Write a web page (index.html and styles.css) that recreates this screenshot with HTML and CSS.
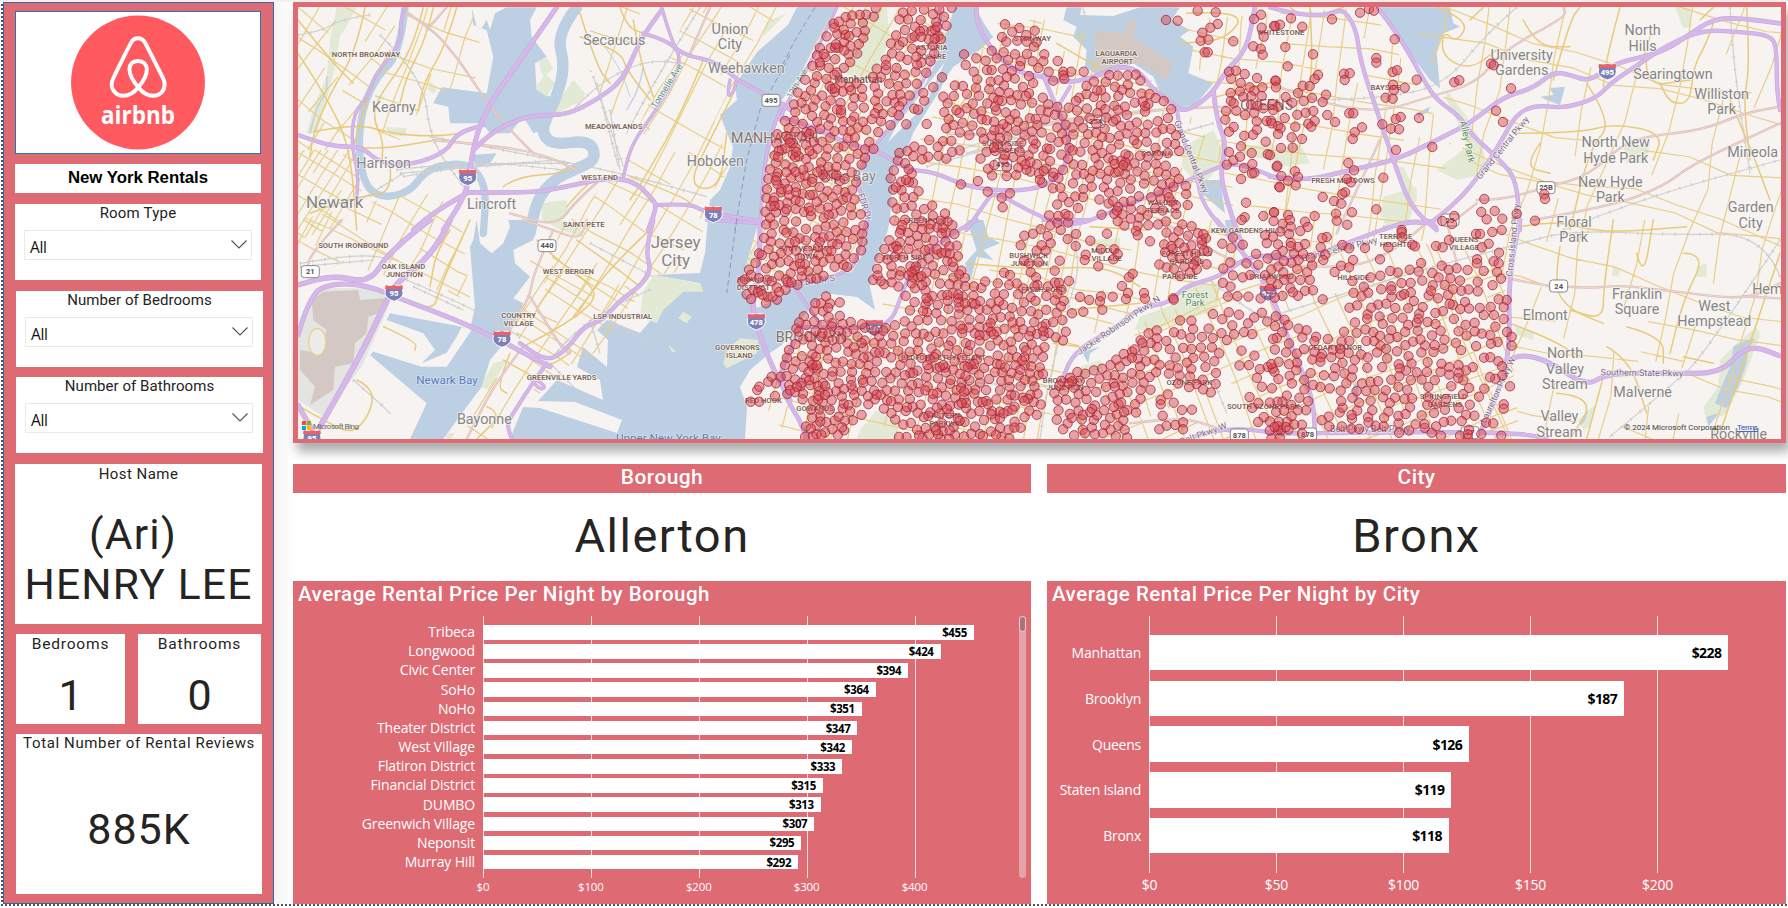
FILE: index.html
```html
<!DOCTYPE html>
<html lang="en">
<head>
<meta charset="utf-8">
<title>New York Rentals</title>
<link rel="stylesheet" href="styles.css">
</head>
<body>
<div class="report">
  <aside class="sidebar">
    <div class="card logo">
      <svg viewBox="0 0 246 143" width="244" height="141">
        <circle cx="123" cy="71.5" r="67.900" fill="#ff5a5f"/>
        <g transform="translate(-15 -11) scale(.33333)" fill="none" stroke="#fff" stroke-width="12" stroke-linejoin="round">
          <path d="M415 262C396 240 388 222 388 207C389 190 399 182 414 182C430 182 440 192 441 207C441 223 434 240 415 262C400 281 386 288 369 288C344 288 328 264 336 241C342 226 380 150 393 126C399 115 406 113 414 113C423 113 430 116 436 127L491 236C503 263 486 288 460 288C442 288 428 279 415 262Z"/>
        </g>
        <text x="123" y="113.500" class="wordmark" text-anchor="middle" textLength="75" lengthAdjust="spacingAndGlyphs">airbnb</text>
      </svg>
    </div>
    <div class="card heading">New York Rentals</div>
    <div class="card slicer"><div class="label">Room Type</div><div class="select"><span>All</span><svg width="16" height="9" viewBox="0 0 16 9"><path d="M.5.5L8 8L15.500.5"/></svg></div></div>
    <div class="card slicer shift beds"><div class="label">Number of Bedrooms</div><div class="select"><span>All</span><svg width="16" height="9" viewBox="0 0 16 9"><path d="M.5.5L8 8L15.500.5"/></svg></div></div>
    <div class="card slicer shift baths"><div class="label">Number of Bathrooms</div><div class="select"><span>All</span><svg width="16" height="9" viewBox="0 0 16 9"><path d="M.5.5L8 8L15.500.5"/></svg></div></div>
    <div class="card host"><div class="label">Host Name</div><div class="big"><span class="first">(Ari)</span><span>HENRY LEE</span></div></div>
    <div class="pair">
      <div class="card count"><div class="label">Bedrooms</div><div class="num">1</div></div>
      <div class="card count"><div class="label">Bathrooms</div><div class="num">0</div></div>
    </div>
    <div class="card reviews"><div class="label">Total Number of Rental Reviews</div><div class="num">885K</div></div>
  </aside>
  <main class="content">
    <div class="map"><svg id="map" viewBox="298 7 1483 432" width="1483" height="432"></svg></div>
    <div class="columns">
      <section class="col">
        <div class="banner">Borough</div>
        <div class="value">Allerton</div>
        <div class="panel">
          <h2>Average Rental Price Per Night by Borough</h2>
          <div class="chart boroughs" id="boroughs"></div>
          <div class="scroll"><i></i></div>
        </div>
      </section>
      <section class="col">
        <div class="banner">City</div>
        <div class="value">Bronx</div>
        <div class="panel">
          <h2>Average Rental Price Per Night by City</h2>
          <div class="chart cities" id="cities"></div>
        </div>
      </section>
    </div>
  </main>
</div>
<script src="app.js"></script>
</body>
</html>
```
FILE: styles.css
```css
* { box-sizing: border-box; }
body { margin: 0; width: 1788px; height: 908px; overflow: hidden; background: #fff; font-family: Roboto, "Liberation Sans", sans-serif; color: #252423; }
.report { display: flex; position: relative; height: 907px; padding: 2px 0 0 3px; background: linear-gradient(#ececea, #f5f5f3) 0 0 / 100% 2px no-repeat, linear-gradient(90deg, #f4f4f4, #fff 20px) 274px 0 / 20px 904px no-repeat; }
.report::before { content: ""; position: absolute; left: 1px; top: 4px; width: 2px; height: 900px; background: repeating-linear-gradient(#555 0 2px, #fff 2px 4px); }
.report::after { content: ""; position: absolute; left: 1px; right: 0; bottom: 1px; height: 2px; background: repeating-linear-gradient(90deg, #555 0 2px, #fff 2px 4px); }
.sidebar { width: 271px; height: 902px; background: #de6a73; border: 1px solid #2f66ad; padding: 8px 0 0 11px; display: flex; flex-direction: column; }
.card { background: #fff; width: 246px; flex: none; }
.logo { height: 143px; border: 1px solid #2474c4; }
.logo svg { display: block; }
.wordmark { font: 700 26px "Open Sans", sans-serif; fill: #fff; }
.heading { height: 29px; margin-top: 10px; text-align: center; font: 700 16.800px/28px "Liberation Sans", Arial, sans-serif; color: #000; }
.slicer { height: 76px; margin-top: 11px; }
.shift { margin-left: 1px; width: 247px; }
.baths { margin-top: 10px; }
.label { text-align: center; font-size: 15px; line-height: 18px; letter-spacing: .2px; color: #252423; white-space: nowrap; }
.shift .label { letter-spacing: .05px; }
.select { margin: 8px 9px 0 9px; height: 30px; width: 228px; border: 1px solid #eaeaea; display: flex; align-items: center; justify-content: space-between; padding: 4px 4px 0 5px; font: 15.500px "Open Sans", sans-serif; color: #111; }
.select span { letter-spacing: -.3px; }
.select svg { fill: none; stroke: #555; stroke-width: 1.200; margin-bottom: 6px; }
.host { height: 160px; width: 247px; margin-top: 11px; padding-top: 1px; }
.host .label { letter-spacing: .45px; }
.big { display: flex; flex-direction: column; font-size: 42.500px; line-height: 50px; margin-top: 27px; align-items: center; white-space: nowrap; }
.big .first { margin-right: 11px; }
.big span { letter-spacing: 1.200px; }
.pair { display: flex; gap: 13px; margin: 10px 0 0 1px; }
.count { width: 109px; height: 90px; padding-top: 1px; }
.count + .count { width: 123px; }
.count .label { font-size: 15.500px; letter-spacing: .8px; }
.num { text-align: center; font-size: 43px; line-height: 50px; }
.count .num { margin-top: 17px; }
.reviews { height: 160px; margin: 10px 0 0 1px; }
.reviews .label { letter-spacing: .63px; }
.reviews .num { margin-top: 52px; letter-spacing: 1px; }
.content { margin-left: 19px; width: 1493px; }
.map { height: 441px; background: #de6a73; padding: 5px 5px 4px; box-shadow: 4px 9px 10px rgba(0,0,0,.32); }
.map svg { display: block; }
.map text { font-family: Roboto, sans-serif; }
.columns { display: flex; gap: 16px; margin-top: 21px; }
.col { width: 738px; }
.col + .col { width: 739px; }
.banner { height: 29px; background: #de6a73; color: #fff; text-align: center; font-size: 21px; line-height: 26px; font-weight: 500; letter-spacing: .4px; }
.value { height: 88px; text-align: center; font-size: 47px; line-height: 86px; letter-spacing: 1.500px; }
.panel { position: relative; height: 323px; background: #de6a73; }
h2 { margin: 0; padding: 1px 0 0 5px; height: 35px; color: #fff; font-size: 20.500px; line-height: 24px; font-weight: 500; letter-spacing: .52px; white-space: nowrap; }
.chart { display: grid; color: #fff; font-family: "Open Sans", sans-serif; }
.plot { display: flex; flex-direction: column; background: repeating-linear-gradient(90deg, #f7dfe1 0 1px, transparent 1px var(--step)); }
.names { display: flex; flex-direction: column; text-align: right; white-space: nowrap; }
.bar { background: #fff; color: #000; font-weight: 700; display: flex; justify-content: flex-end; align-items: center; padding-right: 7px; flex: none; }
.axis { display: flex; }
.axis span { flex: none; text-align: center; }
.boroughs { grid-template-columns: 182px 1fr; --step: 107.900px; font-size: 14px; letter-spacing: -.15px; }
.boroughs .names { padding-top: 6px; line-height: 19.170px; }
.boroughs .plot { margin-left: 8px; width: 492px; height: 262px; padding-top: 9px; gap: 4.670px; }
.boroughs .bar { height: 14.500px; font-size: 11.500px; letter-spacing: -.4px; }
.boroughs .axis { grid-column: 2; margin-left: -46px; font-size: 11.500px; line-height: 17px; }
.boroughs .axis span { width: 107.900px; }
.cities { grid-template-columns: 94px 1fr; --step: 127px; font-size: 14px; letter-spacing: -.25px; }
.cities .names { padding-top: 14px; line-height: 45.750px; }
.cities .plot { margin-left: 8px; width: 580px; height: 257px; padding-top: 19px; gap: 10.350px; }
.cities .bar { height: 35.400px; font-size: 14px; letter-spacing: -.6px; }
.cities .axis { grid-column: 2; margin-left: -55px; font-size: 14px; line-height: 24px; }
.cities .axis span { width: 127px; }
.scroll { position: absolute; right: 5px; top: 35px; width: 7px; height: 262px; border-radius: 4px; background: #e3a4a9; }
.scroll i { display: block; height: 16px; border: 1px solid #efd0d2; border-radius: 4px; background: #a87379; }
```
FILE: app.js
```js
function chart(id, scale, rows, ticks) {
  document.getElementById(id).innerHTML =
    '<div class="names">' + rows.map(r => `<span>${r[0]}</span>`).join('') + '</div>' +
    '<div class="plot">' + rows.map(r => `<div class="bar" style="width:${(r[1] * scale).toFixed(1)}px">$${r[1]}</div>`).join('') + '</div>' +
    '<div class="axis">' + ticks.map(t => `<span>$${t}</span>`).join('') + '</div>';
}
chart('boroughs', 1.079, [['Tribeca', 455], ['Longwood', 424], ['Civic Center', 394], ['SoHo', 364], ['NoHo', 351], ['Theater District', 347], ['West Village', 342], ['Flatiron District', 333], ['Financial District', 315], ['DUMBO', 313], ['Greenwich Village', 307], ['Neponsit', 295], ['Murray Hill', 292]], [0, 100, 200, 300, 400]);
chart('cities', 2.541, [['Manhattan', 228], ['Brooklyn', 187], ['Queens', 126], ['Staten Island', 119], ['Bronx', 118]], [0, 50, 100, 150, 200]);

/* The map is divided into six tiles; tile units are a third of a pixel. */
const tiles = { A: [290, 0], B: [290, 220], C: [780, 0], D: [780, 220], E: [1270, 0], F: [1270, 220] };
let seed = 77;
const rnd = () => (seed = (seed * 16807) % 2147483647) / 2147483647;
const tile = (k, s) => `<g transform="translate(${tiles[k]}) scale(.33333)">${s}</g>`;
const poly = (p, fill) => `<path d="M${p}Z" fill="${fill}"/>`;
const line = (p, c, w) => `<path d="M${p}" fill="none" stroke="${c}" stroke-width="${w}" stroke-linejoin="round" stroke-linecap="round"/>`;
const pts = s => s.trim().split(/\s+/).map(q => q.split(',').map(Number));
function smooth(s) {
  const p = pts(s);
  let d = p[0].join();
  for (let i = 1; i < p.length - 1; i++) d += `Q${p[i]} ${(p[i][0] + p[i + 1][0]) / 2},${(p[i][1] + p[i + 1][1]) / 2}`;
  return d + 'L' + p[p.length - 1];
}
const inside = (x, y, p) => {
  let c = false;
  for (let i = 0, j = p.length - 1; i < p.length; j = i++)
    if ((p[i][1] > y) !== (p[j][1] > y) && x < (p[j][0] - p[i][0]) * (y - p[i][1]) / (p[j][1] - p[i][1]) + p[i][0]) c = !c;
  return c;
};
const WATER = '#bccfe3', PARK = '#e2ead5', LAND = '#f6f3f1', AIR = '#d3c8c3';
let out = `<rect x="298" y="7" width="1483" height="432" fill="${LAND}"/>`;

const waters = {
  A: ['545,22 550,75 575,85 590,60 600,90 615,40 650,22 740,22 720,60 725,110 770,170 735,190 740,270 780,290 760,390 730,400 700,350 660,400 600,400 575,370 480,370 475,320 430,310 455,262 590,280 610,170 590,90 560,80'],
  B: ['655,0 660,20 640,70 605,100 570,70 560,0 550,60 540,80 550,200 555,260 540,330 515,320 300,280 290,300 400,340 435,390 395,430 470,398 500,350 515,322 545,330 470,440 395,440 250,395 240,405 410,550 360,657 460,657 530,560 575,500 600,420 650,360 700,250 670,235 720,170 675,130 670,90 730,60 740,0'],
  C: ['500,22 590,22 610,90 640,110 600,150 520,200 480,260 520,140', '860,22 905,22 900,45 1000,48 1080,22 1200,22 1175,60 1230,90 1200,110 1240,140 1225,220 1300,250 1250,310 1200,325 1150,300 1120,230 1060,190 950,225 915,200 920,150 880,110 890,80 850,60', '1270,540 1320,540 1335,640 1300,610 1265,580'],
  D: ['560,0 610,0 625,50 660,70 610,90 640,120 590,110 570,190 555,130 590,90', '905,395 960,380 930,400 925,430', '1335,0 1370,0 1365,55 1340,50'],
  E: ['330,22 540,22 550,70 570,80 520,100 500,160 510,265 480,240 420,160 370,80', '810,290 850,285 840,265 885,260 870,315 830,300', '440,340 480,320 475,335 445,350'],
  F: ['1390,380 1430,360 1455,355 1435,390 1430,430 1405,500 1370,565 1335,550 1355,500 1385,430', '1310,590 1345,580 1315,620', '935,600 955,570 945,600 930,620', '250,490 265,490 265,540 250,530']
};
const parks = {
  A: ['140,22 200,22 175,70 150,110 135,200 110,300 80,400 50,400 75,310 110,230 120,120', '850,240 885,280 880,300 790,345 780,335', '755,610 830,600 835,640 810,670 755,660', '420,245 445,265 430,280 412,268', '285,380 350,385 345,410 300,405', '1430,65 1490,40 1420,110', '250,285 285,290 270,305'],
  B: ['610,430 650,420 600,510 570,500', '475,640 495,640 480,660 465,655', '760,0 870,10 880,50 810,30'],
  C: ['540,30 600,100 570,85 545,50', '1210,440 1300,390 1340,480 1260,560 1205,500', '1380,440 1480,430 1500,480 1400,470'],
  D: ['1080,290 1190,250 1230,180 1320,200 1310,270 1120,330 1065,330', '240,630 290,570 350,610 345,657 230,657', '900,440 960,420 970,440 880,490', '200,350 235,345 240,400', '930,60 1020,55 1020,80 930,80'],
  E: ['0,460 90,430 120,490 30,500', '530,270 590,350 640,440 650,520 560,540 500,510 590,440 560,360 530,300', '340,590 440,560 440,600 410,680 330,650', '1215,22 1260,22 1265,80 1240,85', '370,500 400,500 435,570 410,590', '1060,440 1140,430 1130,490 1070,490'],
  F: ['1400,370 1460,320 1470,345 1420,480 1370,580 1310,610 1300,560 1345,500 1350,420', '1280,140 1310,130 1310,170 1280,170', '1030,140 1050,150 1045,170 1025,165', '730,310 790,340 790,360 740,345', '335,330 370,400 365,440 340,400', '925,600 980,550 960,620 940,630', '340,0 380,0 380,20 350,25']
};
for (const k in parks) out += tile(k, parks[k].map(p => poly(p, PARK)).join(''));
for (const k in waters) out += tile(k, waters[k].map(p => poly(p, WATER)).join(''));
out += tile('A', poly('745,185 768,170 790,205 770,225 795,250 770,290 735,265 760,230', PARK));
out += tile('A', [
  ['345,22 330,160 260,230 215,330 205,450 225,560 280,595 360,575 400,520 450,495 540,490 590,560 580,700', 22],
  ['860,22 800,100 825,200 800,290 770,350 755,400 790,435 900,420 920,480 850,510 790,540 740,600 720,700', 34],
  ['110,230 115,270 80,320 60,400', 4], ['930,120 990,200 1020,290', 3], ['1060,200 1050,260 1010,330', 4]
].map(r => line(smooth(r[0]), WATER, r[1])).join(''));
out += poly('797,7 788,25 765,45 757,52 735,85 737,100 720,115 727,133 733,147 730,167 720,190 710,200 707,230 705,253 700,273 653,275 700,283 703,291 683,291 657,313 640,333 607,320 597,330 608,340 607,367 583,347 577,367 600,380 603,400 557,380 538,401 575,402 622,420 617,433 540,408 523,407 510,439 745,439 747,407 740,387 750,370 770,353 782,345 797,323 812,307 823,293 857,297 875,310 870,287 873,270 887,233 890,220 893,167 907,150 913,133 940,90 953,63 993,37 985,25 975,7', WATER);
out += poly('835,7 815,45 800,75 782,100 775,130 768,160 763,190 762,210 752,245 745,270 740,285 757,308 775,300 790,289 825,276 852,272 862,255 868,225 860,200 863,165 877,147 893,122 925,85 937,60 947,30 955,7', '#f6f1ef');
out += poly('888,142 897,125 935,75 945,62 925,105', LAND);
out += tile('A', poly('540,465 620,460 600,490 560,500', WATER));
out += tile('B', ['1090,165 1230,190 1240,215 1180,215 1120,270 1100,310 1050,290 1060,215', '1310,390 1350,355 1405,360 1400,400 1310,445 1300,430', '1180,275 1205,290 1190,310 1165,295', '1135,375 1160,395 1145,395', '1380,90 1400,90 1385,160 1365,160'].map(p => poly(p, PARK)).join(''));
out += tile('C', poly('235,60 320,20 330,120 290,205 245,240 185,215 240,120', PARK));

/* Airports */
out += tile('B', poly('75,205 270,205 300,250 215,440 100,590 24,540 24,340 60,240', '#e4e4e3') +
  poly('100,215 205,210 210,240 285,235 275,275 235,290 230,340 195,370 190,430 135,440 130,510 60,555 75,500 30,450 30,390 90,400 110,330 70,300 65,240', AIR) +
  '<ellipse cx="82" cy="366" rx="26" ry="40" fill="#ececeb" stroke="#e9d089" stroke-width="4"/>');
out += tile('C', poly('960,90 1030,100 1055,50 1070,70 1060,110 1180,190 1160,240 1080,190 990,200 945,225 945,100', AIR));

/* Street grids: region outline, rotation, spacing across, spacing along */
let clip = 0;
const grid = (region, angle, sx, sy, c = '#e9ce87') => {
  const p = pts(region), id = 'r' + clip++;
  const xs = p.map(q => q[0]), ys = p.map(q => q[1]);
  const cx = (Math.min(...xs) + Math.max(...xs)) / 2, cy = (Math.min(...ys) + Math.max(...ys)) / 2;
  const R = Math.hypot(Math.max(...xs) - cx, Math.max(...ys) - cy);
  let d = '';
  for (const [s, v] of [[sx, 1], [sy, 0]])
    for (let a = -R; a < R; a += s * (.6 + rnd() * .8))
      for (let b = -R, w = 0; b < R; b += 45) {
        const n = w + (rnd() - .5) * s * .35;
        if (rnd() > .18) d += v ? `M${(a + w).toFixed(0)},${b.toFixed(0)}L${(a + n).toFixed(0)},${(b + 45).toFixed(0)}` : `M${b.toFixed(0)},${(a + w).toFixed(0)}L${(b + 45).toFixed(0)},${(a + n).toFixed(0)}`;
        w = n;
      }
  out += `<clipPath id="${id}"><path d="M${region}Z"/></clipPath><g clip-path="url(#${id})"><path transform="translate(${cx} ${cy}) rotate(${angle})" d="${d}" fill="none" stroke="${c}" stroke-width="1.200"/></g>`;
};
grid('298,7 395,7 395,60 360,110 355,150 298,150', 35, 23, 26);
grid('298,150 355,150 362,190 340,225 298,240', 32, 9, 14);
grid('410,7 470,7 490,80 430,95 400,140 370,130 375,80', 18, 25, 30);
grid('590,7 640,7 640,60 620,130 590,80', 18, 26, 36);
grid('690,7 780,7 760,45 730,90 715,120 730,170 705,200 700,270 650,275 640,300 530,330 560,230 620,170 650,100', 30, 17, 30);
grid('530,260 640,290 600,350 560,370 500,439 460,439 510,350', 33, 19, 18);
grid('298,220 420,190 460,210 470,300 400,280 298,250', 28, 26, 22);
grid('835,7 815,45 775,130 745,270 757,305 790,289 852,272 868,225 860,200 877,147 937,60 955,7', 28, 13, 19);
grid('1000,20 1080,20 1100,75 1140,70 1190,115 1230,170 1250,300 1160,300 1080,340 1060,439 790,439 760,400 790,340 880,320 900,180 930,120', 12, 19, 24);
grid('1180,20 1370,7 1420,90 1460,160 1430,240 1300,250 1220,180 1215,110', 8, 20, 24);
grid('1160,300 1300,250 1500,240 1520,439 1060,439', -22, 19, 22);
grid('1410,7 1781,7 1781,439 1520,439 1500,250', 14, 46, 50);

const minor = {
  A: ['24,60 130,190 190,250', '225,22 200,150 120,280 70,400 60,470', '300,150 240,260 220,340 190,440', '400,22 380,100 340,190 260,300 250,360 280,420 275,500', '430,22 410,110 350,230 330,310', '500,22 470,130 400,250 385,330', '70,395 200,370 300,400 420,410 520,400', '190,440 260,450 440,420', '300,500 310,580 200,590 60,640', '640,560 680,530 820,520 850,500', '870,110 990,150 1010,210 1080,300', '990,22 1010,80 1060,100', '870,40 920,200 960,250', '1030,60 1050,180 1090,290', '1240,180 1180,330 1060,540 1020,600', '1330,280 1270,400 1190,560 1290,570 1310,400', '24,160 110,290 180,440 200,690', '830,620 900,540 930,540', '1020,530 1180,590 1210,620'],
  B: ['350,240 430,280 450,200 540,0', '200,480 270,510 200,650 100,600 30,560', '280,320 380,365 375,390', '480,30 440,90 420,200', '740,60 800,120 900,190 920,240 830,310 700,380', '860,60 960,130 1050,200', '1090,20 970,130 850,290', '770,440 850,400 830,380', '640,420 730,470', '590,560 640,580 560,657', '660,400 620,500 650,520'],
  E: ['120,22 130,200 110,280', '60,22 100,60 220,22', '500,22 600,60 560,130 520,90 515,170 600,210 680,150', '640,22 600,60', '760,60 800,140 900,140', '850,240 900,60 930,22', '1050,22 1010,170 1000,260', '950,250 1030,370 960,440 900,690', '1330,70 1310,130 1270,200 1260,310 1200,310 1170,250', '730,400 930,400 1030,370 1180,400 1150,480', '810,430 760,500 840,520', '1330,22 1290,60', '1130,160 1120,260 1260,240', '1380,300 1440,440 1500,600', '1430,22 1440,200 1420,300 1440,480'],
  F: ['750,20 850,0 1000,40 1250,20', '870,80 850,200 900,270 1000,310', '1030,0 1000,200 1000,300 900,270', '1240,100 1310,100 1240,240 1200,400', '1100,100 1120,180 1150,0', '1530,100 1480,250 1350,640', '1070,320 1180,350 1180,430', '720,310 830,350 930,410', '1000,470 950,657', '1240,410 1330,430', '860,520 980,530 900,657', '1010,380 1080,420 1130,580'],
  D: ['560,130 760,150 900,140 1000,150 1080,200', '870,270 1080,250', '820,370 900,380', '930,20 1100,30'], C: ['830,130 950,200', '1220,40 1400,30 1340,120 1200,130', '600,240 500,370', '1310,290 1430,260 1500,240']
};
const tan = {
  A: ['340,30 430,90 490,160 520,200 600,320 670,400 730,460', '430,420 540,430 740,455 860,510', '470,22 410,90', '930,540 860,600 800,680 660,640', '1260,22 1200,160'],
  B: ['700,0 790,30 870,60 890,0', '790,30 730,160 720,230 660,330', '720,230 770,310 820,390 840,400', '700,380 620,480 530,657', '155,0 60,100 50,160'],
  C: ['500,400 650,410 830,360 1100,330 1340,320', '760,380 1140,330'],
  E: ['0,250 120,300 320,340 480,290 620,250 700,150 890,50 880,22', '620,600 700,600 830,560 950,530 1050,440 1120,410 1300,390 1420,340 1530,320', '530,680 620,610', '790,660 1020,620 1180,560 1270,490 1530,370', '330,420 200,700'],
  F: ['700,170 790,195 970,205 1050,195 1220,215 1430,240 1530,190', '1430,230 1530,235', '0,130 200,150 350,110 480,0', '530,0 560,130'], D: ['1050,610 1200,590 1300,620 1400,650', '1140,0 1290,90 1400,140']
};
const rail = {
  A: ['24,105 90,95 150,60 240,45', '270,105 400,230 420,420 520,560', '420,410 640,450 1000,520 1250,590', '320,510 540,480 820,510', '340,530 560,490 840,490', '330,520 560,500 800,480', '210,600 340,520', '840,340 910,260 1060,180 1180,190', '910,230 1000,500', '920,250 985,500', '960,330 990,510', '1230,22 1090,250 1010,400'],
  B: ['30,130 200,100 320,120', '30,140 250,120', '350,180 540,260 690,350', '370,200 520,270', '900,70 1090,170', '1080,210 960,260 850,340 780,420', '190,480 270,550 300,580', '780,430 880,530', '960,300 1080,370', '900,300 930,400'],
  C: ['540,450 700,390 780,410', '560,460 760,400', '440,500 680,430', '1190,400 1300,370', '900,0 920,60'],
  E: ['740,22 650,100 520,260 320,295 130,300', '1380,22 1390,200 1440,520', '880,690 1100,600 1530,480'],
  F: ['1530,170 1480,40 1200,45 900,30 720,80 450,150 0,290', '1530,60 1300,410 1200,500 1020,650', '280,190 360,330 500,560', '340,20 500,0'],
  D: ['780,657 800,500 870,240 900,140 870,0', '1290,180 1400,270 1500,310', '1300,480 1340,580', '240,470 800,500']
};
const hwy = {
  A: ['345,22 330,60 335,110 310,160 250,230 240,280 190,340 185,440 205,520 200,600|8', '24,405 80,425 140,440 215,440 270,490 370,495 470,455 500,400 580,375|11', '800,22 690,180 600,310 560,400 540,500 530,580 460,690|13', '550,450 600,400 680,360 740,345 830,345 920,300 1000,240 1050,120 1115,30|12', '530,577 720,580 830,560 940,535 1030,540 1090,600 1100,620 1075,690|12', '530,580 440,630 370,690|13', '1060,100 1130,120 1180,165 1280,185 1340,240 1440,290 1500,330|10', '1115,22 1140,110 1180,190 1100,330 1025,430 1000,530|8', '1320,240 1310,290 1330,280 1340,240|8', '1100,615 1200,610 1240,635 1420,665|10', '1480,310 1440,400 1420,520 1410,690|9'],
  B: ['480,0 440,90 330,180 300,220 215,400 90,620|15', '420,0 300,90 240,190 130,165 24,195|14', '24,345 60,220 130,190 230,195 340,240 500,300 640,365 740,420 780,440|13', '1090,0 1065,90 1085,150 1050,200 990,240 940,300 880,320 830,390 770,425 690,370|11', '1250,0 1420,10|9', '1410,0 1410,150 1385,250 1400,320 1450,450 1500,540|13', '770,430 720,500 670,580 650,610 665,657|10', '24,555 60,620 85,657|14', '740,480 770,500 750,510 725,480|8'],
  C: ['170,22 130,110 80,210 20,310 0,360|8', '0,350 100,380 200,430 300,455 380,510 460,515 560,560 690,575 800,560 860,500 870,410 820,300 790,225|11', '480,22 480,120 440,230 370,330 290,430 240,500 230,560 265,620 260,690|9', '590,22 585,70 650,170 720,220 790,230 860,250 950,230 1010,200 1070,205 1120,270 1190,320 1215,335 1290,290 1340,210 1400,150 1425,22|12', '1190,320 1200,410 1250,500 1260,600 1330,690|10', '1300,270 1310,360 1340,430 1320,520 1340,600 1370,690|12', '560,690 620,600 645,575 740,630 840,675 910,670 980,640 1080,600 1180,560 1250,530 1340,490 1410,500 1500,540|10', '840,310 870,260|9'],
  D: ['590,0 480,60 400,140 370,210 330,320 210,325 60,320|10', '60,310 30,400 0,450 20,540 60,600 80,657|12', '35,190 120,310|8', '20,200 210,165 235,100 260,0|8', '850,480 860,430 920,370 1000,330 1080,260 1170,250 1210,200 1320,170 1400,110 1500,105|11', '1310,0 1390,100 1450,180 1500,290|12', '1240,650 1330,620 1500,640|10', '790,0 930,0|10', '1360,0 1390,80|10'],
  E: ['0,22 80,45 180,45 220,25 260,90 270,180 320,330 370,480 420,620 500,690|11', '325,25 390,110 460,240 500,300 570,350 600,400 690,480 740,540 750,690|11', '0,530 100,545 240,510 380,480 520,410 600,370 700,290 790,265 850,215 900,225 960,245 1030,190 1170,160 1250,110 1330,55 1420,55 1530,70|12', '480,670 560,610 640,510 690,430 740,340 800,315 880,325 980,295 1020,250 1110,190 1200,130 1300,90 1400,95 1500,105 1520,140 1520,260 1530,330|11', '340,690 410,660 480,670|10'],
  F: ['0,115 110,115 230,70 400,5 490,10|11', '0,210 60,370 130,530 135,657|11', '750,0 715,150 720,400 680,530 630,640|12', '720,420 750,400 840,425 950,500 1010,460 1200,460 1350,460 1410,395 1460,380 1530,408|13', '0,640 150,640 480,635 760,640 830,657|11', '470,0 500,20|8']
};
const layer = (set, f) => { for (const k in set) out += tile(k, set[k].map(f).join('')); };
layer(rail, s => line(smooth(s), '#d0d0cf', 3.5) + `<path d="M${smooth(s)}" fill="none" stroke="#cbcbca" stroke-width="10" stroke-dasharray="3 34"/>`);
layer(minor, s => line(smooth(s), '#e8ca78', 4.5));
layer(tan, s => line(smooth(s), '#dbb9c4', 7) + line(smooth(s), '#f0dcc0', 3));
layer(hwy, s => { const [p, w] = s.split('|'); return line(smooth(p), '#c3a5d8', +w + 2); });
layer(hwy, s => { const [p, w] = s.split('|'); return line(smooth(p), '#d5b8e9', w - 1); });
out += tile('A', '<path d="M1500 165L1410 330L1370 480L1335 690" fill="none" stroke="#8f9ba8" stroke-width="3" stroke-dasharray="16 10"/>') +
  tile('B', '<path d="M1340 0L1310 220" fill="none" stroke="#8f9ba8" stroke-width="3" stroke-dasharray="16 10"/>') +
  tile('C', '<path d="M105 22L40 130L0 210" fill="none" stroke="#8f9ba8" stroke-width="3" stroke-dasharray="16 10"/>');

/* Labels: x|y|text|size|kind|rotation */
const kinds = { c: ['#858585', 400], n: ['#7c6558', 600], b: ['#5b7cc0', 400], g: ['#4f8a5b', 400], r: ['#7d6b85', 400], m: ['#85706a', 400], t: ['#4f8f86', 400] };
const labels = {
  A: ['228|163|NORTH BROADWAY|23|n', '312|322|Kearny|43|c', '281|490|Harrison|43|c', '134|607|Newark|51|c', '605|613|Lincroft|43|c', '973|121|Secaucus|43|c', '1320|86|Union|43|c', '1320|132|City|43|c', '1369|203|Weehawken|43|c', '971|380|MEADOWLANDS|23|n', '1276|484|Hoboken|43|c', '1454|414|MANHATTAN|43|m', '929|531|WEST END|23|n', '881|672|SAINT PETE|23|n', '1130|257|Tonnelle Ave|27|t|-58'],
  B: ['190|77|SOUTH IRONBOUND|23|n', '340|139|OAK ISLAND|23|n', '343|163|JUNCTION|23|n', '835|153|WEST BERGEN|23|n', '1157|67|Jersey|51|c', '1157|120|City|51|c', '686|286|COUNTRY|23|n', '686|310|VILLAGE|23|n', '998|288|LSP INDUSTRIAL|23|n', '815|471|GREENVILLE YARDS|23|n', '471|479|Newark Bay|35|b', '583|598|Bayonne|43|c', '1135|653|Upper New York Bay|35|b', '1342|382|GOVERNORS|23|n', '1348|407|ISLAND|23|n', '1420|541|RED HOOK|23|n', '1400|177|FINANCIAL|23|n', '1390|201|DISTRICT|23|n'],
  C: ['455|142|ASTORIA|23|n', '455|168|SQUARE|23|n', '757|114|STEINWAY|23|n', '1009|160|LAGUARDIA|23|n', '1012|185|AIRPORT|23|n', '235|238|Manhattan|30|n', '205|527|Kips Bay|43|c', '668|431|SUNNYSIDE|23|n', '680|452|GARDENS|23|n', '1130|461|CORONA|23|n', '1148|608|WALDEN|23|n', '1148|632|TERRACE|23|n', '440|660|GREENPOINT|23|n', '1460|315|QUEENS|42|m', '1502|98|WHITESTONE|23|n', '1235|470|Grand Central Pkwy|27|r|68', '1405|690|KEW GARDENS HILLS|23|n', '255|620|FDR Dr|27|r|72', '50|250|12th Ave|25|t|-60'],
  D: ['94|352|BROOKLYN|43|m', '70|85|STUYVESANT|23|n', '80|108|TOWN|23|n', '112|180|FDR Dr S|27|r|-8', '375|112|NORTH SIDE|23|n', '746|106|BUSHWICK|23|n', '748|131|JUNCTION|23|n', '975|90|MIDDLE|23|n', '980|115|VILLAGE|23|n', '790|208|FRESH POND|22|n', '490|411|BEDFORD-STUYVESANT|23|n', '850|480|BROADWAY|23|n', '855|503|JUNCTION|23|n', '1228|488|OZONE PARK|23|n', '1450|558|SOUTH OZONE PARK|23|n', '1200|169|PARKSIDE|23|n', '1220|101|FOREST HILLS|23|n', '1220|125|GARDENS|23|n', '1245|223|Forest|28|g', '1245|249|Park|28|g', '1015|315|Jackie Robinson Pkwy N|27|r|-34', '1270|640|Belt Pkwy W|27|r|-20', '105|565|GOWANUS|23|n', '490|585|EASTERN|23|n', '500|610|PARKWAY|23|n', '1475|169|BRIARWOOD|23|n'],
  E: ['1118|91|North|43|c', '1118|137|Hills|43|c', '755|164|University|43|c', '755|210|Gardens|43|c', '1209|223|Searingtown|43|c', '1355|281|Williston|43|c', '1355|327|Park|43|c', '1037|427|North New|43|c', '1037|473|Hyde Park|43|c', '1448|457|Mineola|43|c', '1021|546|New Hyde|43|c', '1021|591|Park|43|c', '912|665|Floral|43|c', '1442|621|Garden|43|c', '1442|668|City|43|c', '347|261|BAYSIDE|23|n', '219|542|FRESH MEADOWS|23|n', '593|425|Alley Park|29|g|78', '697|443|Grand Central Pkwy|27|r|-51'],
  F: ['911|50|Park|43|c', '826|284|Elmont|43|c', '1101|221|Franklin|43|c', '1101|267|Square|43|c', '1333|257|West|43|c', '1333|303|Hempstead|43|c', '1492|207|Hem|43|c', '885|400|North|43|c', '885|446|Valley|43|c', '885|492|Stream|43|c', '1118|516|Malverne|43|c', '868|589|Valley|43|c', '868|636|Stream|43|c', '1406|643|Rockville|43|c', '1116|458|Southern State Pkwy|27|r|1', '728|60|Cross Island Pkwy|27|r|-84', '377|48|TERRACE|23|n', '377|72|HEIGHTS|23|n', '582|59|QUEENS|23|n', '582|83|VILLAGE|23|n', '250|173|HILLSIDE|23|n', '196|381|CEDAR MANOR|23|n', '520|529|SPRINGFIELD|23|n', '525|553|GARDENS|23|n', '208|87|Grand Central Pkwy|27|r|-14', '300|625|Belt Pkwy Belt Pkwy|27|r', '683|510|Laurelton Pkwy W|27|r|-65']
};
layer(labels, s => {
  const [x, y, t, z, k, a] = s.split('|');
  return `<text x="${x}" y="${+y + z * .36}" font-size="${z}" font-weight="${kinds[k][1]}" fill="${kinds[k][0]}" text-anchor="middle" stroke="#fbf9f7" stroke-opacity="${k === 'b' ? .4 : .75}" stroke-width="5" stroke-linejoin="round" paint-order="stroke"${a ? ` transform="rotate(${a} ${x} ${y})"` : ''}>${t}</text>`;
});
const shields = { A: ['533,531,95', '1270,642,78'], B: ['312,218,95', '636,356,78', '1399,304,478', '66,653,95'], D: ['283,322,278', '1465,218,678'], E: ['1012,214,495'] };
layer(shields, s => {
  const [x, y, t] = s.split(',');
  return `<g transform="translate(${x} ${y})"><path d="M-25-22H25L27 2Q26 18 0 26Q-26 18-27 2Z" fill="#7c7fb8" stroke="#fff" stroke-width="3"/><path d="M-25-23Q-12-17 0-23Q12-17 25-23L27-11H-27Z" fill="#ef5f66"/><text y="11" font-size="23" font-weight="900" fill="#fff" text-anchor="middle">${t}</text></g>`;
});
const routes = { A: ['1443,301,495'], B: ['771,77,440', '61,155,21'], C: ['668,494,495', '948,365,25A'], D: ['1378,645,878'], E: ['828,563,25B', '540,660,25'], F: ['866,198,24', '113,642,878', '600,638,27'] };
layer(routes, s => {
  const [x, y, t] = s.split(',');
  return `<g transform="translate(${x} ${y})"><rect x="-27" y="-18" width="54" height="36" rx="9" fill="#fff" stroke="#8a8a8a" stroke-width="3"/><text y="8" font-size="23" font-weight="700" fill="#555" text-anchor="middle">${t}</text></g>`;
});

/* Listings */
const listed = {
  C: '1253,32 1307,37 1158,60 1193,62 1313,72 1291,83 1267,98 1262,122 1285,119 1360,124 1274,157 1283,157 1443,44 1422,57 1445,83 1486,78 1451,110 1420,139 1442,146 1448,164 1347,215 1368,212 1394,222 1353,236 1431,234 1486,242 1382,249 1409,262 1423,272 1447,262 1352,279 1380,274 1390,290 1414,289 1445,288 1353,303 1361,310 1413,314 1432,317 1477,312 1338,333 1369,332 1395,345 1423,338 1450,325 1336,359 1430,364 1460,363 1473,362 1361,381 1347,395 1393,407 1419,404 1431,389 1457,425 1383,439 1347,456 1415,459 1463,463 1380,470 1360,481 1340,494 1392,504 1417,492 1383,537 1416,520 1423,518 1490,500 1498,560 1398,608 1482,637 1450,648 1394,652 1385,660 290,206 486,232 460,262 433,302 430,279 403,326 414,329 379,373 440,372 332,535 543,553 594,543 623,575 665,593 690,580 668,622 911,215 873,215 833,183 820,242 552,163 557,195 589,175 675,73 718,84 697,95 666,111 679,125 712,122 739,105 764,92 740,125 770,127 762,140 635,152 671,157 705,163 741,162 793,163 650,175 684,180 722,184 758,184 790,184 617,182 581,215 621,210 635,210 669,208 695,213 720,198 747,228 775,204 806,215 850,215 850,226 853,236',
  E: '270,38 297,27 312,32 63,55 12,78 30,74 97,80 186,58 46,141 129,163 53,199 374,118 319,174 319,188 368,216 381,211 222,221 239,220 224,240 144,225 134,237 17,242 18,262 98,257 119,258 84,279 440,239 369,254 404,263 372,270 347,293 368,296 553,247 568,241 663,191 671,196 723,265 678,332 699,366 168,284 158,306 126,294 101,303 47,291 67,308 24,320 10,330 44,354 82,344 107,338 130,333 172,345 195,366 238,340 250,340 337,373 377,357 392,351 447,354 363,386 387,388 115,371 134,363 124,380 76,380 24,378 32,385 5,370 24,402 65,412 96,417 33,444 68,443 0,465 254,397 276,382 248,417 378,450 487,441 235,489 252,511 231,537 243,547 340,533 22,497 75,514 34,528 84,531 54,542 77,556 29,562 158,591 192,603 225,577 217,582 214,611 198,641 246,637 319,628 12,637 54,645 60,660 38,671 62,680 134,648 105,665 113,681 200,662 232,674 395,690 553,648 517,663 546,672 643,597 634,636 674,633 650,658 697,656 740,641 795,662 823,583 825,597',
  B: '1382,545 1408,545 1402,510 1408,500 1435,485 1445,470 1458,490 1472,470 1490,468 1485,435 1455,528 1492,522 1497,390 1377,149 1357,184 1365,178 1383,165 1370,223 1383,237 1390,210 1413,212 1428,250 1433,230 1461,239',
  F: '285,84 355,82 330,118 331,167 364,199 158,238 62,68 105,72 38,93 18,105 152,82 170,51 157,54 217,75 237,85 166,104 160,120 249,120 237,142 213,137 194,156 395,37 396,52 427,74 435,79 498,78 518,82 537,60 618,42 630,42 667,36 695,30 636,82 656,71 687,98 671,124 686,130 621,118 621,130 641,153 681,156 693,176 710,240 686,238 701,262 672,285 701,297 711,336 725,350 725,377 720,499 701,553 701,566 648,608 670,610 634,642 694,647 683,366 663,371 642,413 661,412 685,424 696,439 697,466 676,476 660,472 643,506 627,530',
  D: '672,158 690,165 733,47 759,41 722,76 782,28 803,48 812,70 842,30 863,57 888,42 887,78 931,62 981,41 917,104 914,120 963,88 955,139 1003,88 1013,102 1000,118 839,122 824,152 867,183 900,231 928,240 963,229 960,244 998,230 967,269 910,275 876,280 1038,237 1044,219 1026,198 1047,172 1058,161 1092,219 1095,236 1180,235 1181,239 1073,17 1068,33 1073,46 1110,64 1138,628 1160,617 1186,615 1209,607 1209,628 1148,587 1181,548 1206,570 1236,569 1163,523 1142,540 1142,553 732,122 748,130 776,127 770,92 785,76 797,92 752,157 768,172'
};
let dots = [];
for (const k in listed) for (const [x, y] of pts(listed[k])) dots.push([tiles[k][0] + x / 3, tiles[k][1] + y / 3]);
const scatter = (k, region, n) => {
  const p = pts(region).map(q => k ? [tiles[k][0] + q[0] / 3, tiles[k][1] + q[1] / 3] : q);
  const xs = p.map(q => q[0]), ys = p.map(q => q[1]);
  const x0 = Math.min(...xs), x1 = Math.max(...xs), y0 = Math.min(...ys), y1 = Math.max(...ys);
  for (let i = 0, t = 0; i < n && t < 60000; t++) {
    const x = x0 + rnd() * (x1 - x0), y = y0 + rnd() * (y1 - y0);
    if (!inside(x, y, p)) continue;
    const gap = rnd() < .035 ? 3 : 7.4;
    if (dots.some(d => Math.abs(d[0] - x) < gap && Math.hypot(d[0] - x, d[1] - y) < gap)) continue;
    dots.push([x, y]); i++;
  }
};
scatter('', '840,10 880,7 866,30 858,55 838,77 865,83 882,70 890,45 903,10 953,7 940,45 927,75 903,110 877,147 862,165 857,197 868,230 857,263 825,277 787,290 768,303 745,285 752,265 763,230 766,190 778,130 795,95 815,60 825,35', 385);
scatter('C', '480,330 490,280 545,235 620,220 760,240 790,290 830,320 870,320 885,420 860,500 830,570 750,535 620,530 600,480 610,420 490,390', 130);
scatter('C', '870,320 920,255 1000,215 1070,215 1130,290 1160,300 1200,380 1200,460 1190,530 1250,590 1200,650 1090,690 960,660 940,570 900,600 890,660 850,690 770,690 850,540 860,400', 180);
scatter('C', '340,480 370,440 430,420 540,420 540,470 400,500 430,600 520,650 520,690 345,690 330,600', 48);
scatter('D', '345,20 360,0 520,0 550,150 560,200 640,175 700,190 850,180 860,360 800,370 790,430 790,560 760,600 700,657 350,657 350,610 290,560 230,600 220,640 70,657 90,560 20,520 0,440 30,380 60,280 130,225 200,240 180,300 330,320 400,260 350,220 275,190 300,90', 570);
scatter('D', '850,460 980,440 1070,370 1140,310 1140,460 1060,600 1040,657 860,657 820,600 810,540', 100);
scatter('D', '1110,0 1250,10 1280,50 1290,150 1200,170 1130,130 1150,60', 34);
scatter('D', '1160,340 1200,300 1300,280 1420,270 1500,290 1500,330 1340,370 1310,450 1310,520 1180,500 1150,450', 52);
scatter('D', '1310,60 1500,30 1500,220 1400,270 1330,240', 24);
scatter('D', '1350,380 1500,380 1500,657 1420,600 1400,480', 22);
scatter('F', '0,0 100,0 130,150 130,220 20,250 0,230', 32);
scatter('F', '220,180 300,160 460,120 600,150 690,200 710,350 620,380 560,400 350,420 200,430 230,280', 120);
scatter('F', '0,280 90,300 200,370 330,400 480,420 610,430 620,640 600,657 140,620 200,540 0,480', 140);
scatter('F', '0,540 120,500 110,640 0,657', 22);
out += '<g fill="#d8434f" fill-opacity=".47" stroke="#9b2231" stroke-opacity=".75" stroke-width="1">' + dots.map(d => `<circle cx="${d[0].toFixed(1)}" cy="${d[1].toFixed(1)}" r="4.700"/>`).join('') + '</g>';
out += '<g><path d="M302 421h4v4h-4z" fill="#f25022"/><path d="M307 421h4v4h-4z" fill="#7fba00"/><path d="M302 426h4v4h-4z" fill="#00a4ef"/><path d="M307 426h4v4h-4z" fill="#ffb900"/><text x="313" y="428.500" font-size="8" fill="#666" textLength="46">Microsoft Bing</text><text x="1624" y="430" font-size="8" fill="#444" textLength="106">© 2024 Microsoft Corporation</text><text x="1737" y="430" font-size="8" fill="#2a56b8" text-decoration="underline" textLength="21">Terms</text></g>';
document.getElementById('map').innerHTML = out;
```
